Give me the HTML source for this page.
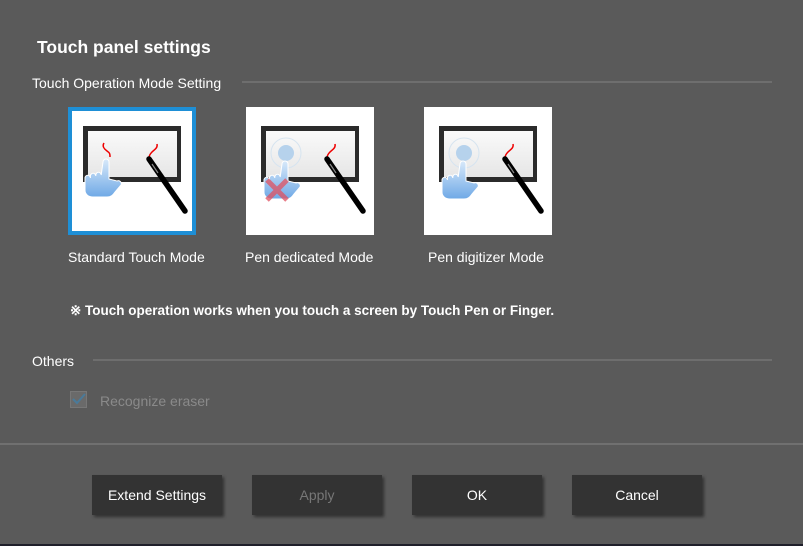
<!DOCTYPE html><html><head><style>
body{margin:0;width:803px;height:546px;background:#5a5a5a;font-family:"Liberation Sans",sans-serif;color:#fff;position:relative;overflow:hidden}
.a{position:absolute;white-space:nowrap}
.line{position:absolute;height:2px;background:#6e6e6e}
.tile{position:absolute;top:107px;width:128px;height:128px;background:#fff;box-sizing:border-box}
.btn{position:absolute;top:475px;width:130px;height:40px;background:#333;box-shadow:2px 2px 3px rgba(0,0,0,.45);text-align:center;line-height:40px;font-size:14px}
.lab{font-size:14px;top:249px}
</style></head><body>
<svg width="0" height="0" style="position:absolute"><defs>
<linearGradient id="sc" x1="0" x2="0" y1="0" y2="1"><stop offset="0" stop-color="#fafafa"/><stop offset="1" stop-color="#e6e6e6"/></linearGradient>
<linearGradient id="hd" x1="0" x2="0" y1="0" y2="1"><stop offset="0" stop-color="#d8e9fa"/><stop offset="1" stop-color="#6fa9e6"/></linearGradient>
<g id="base">
<rect x="15" y="19" width="98" height="56" fill="#2b2b2b"/>
<rect x="20" y="24" width="89" height="46" fill="url(#sc)"/>
<path d="M89 37c1 4-3 6-5 8s-3 4-3 6" stroke="#e00" stroke-width="1.5" fill="none"/>
<path d="M81 52L117 104" stroke="#000" stroke-width="5.5" stroke-linecap="round"/>
<path d="M84 57L90 66" stroke="#888" stroke-width="1.2"/>
</g>
<g id="hand"><path d="M36 57a3 3 0 0 1 6 0v17l8 2a3 3 0 0 1 4 4l-6 7c-2 3-4 5-8 5h-14c-5 0-8-3-8-7v-12a2.7 2.7 0 0 1 5.4 0v-2a2.7 2.7 0 0 1 5.4 0v-1a2.7 2.7 0 0 1 5.4 0z" fill="url(#hd)" stroke="#fff" stroke-width="1"/></g>
</defs></svg>
<div class="a" style="left:37px;top:37px;font-size:17.5px;font-weight:bold">Touch panel settings</div>
<div class="a" style="left:32px;top:75px;font-size:14px">Touch Operation Mode Setting</div>
<div class="line" style="left:242px;width:530px;top:81px"></div>
<div class="tile" style="left:68px;border:4px solid #1e8fd6"><svg width="120" height="120" viewBox="4 4 120 120"><use href="#base"/><path d="M36 36c-2 3 0 6 3 8s3 3 3 6" stroke="#e00" stroke-width="1.5" fill="none"/><use href="#hand" transform="translate(-1,-2)"/></svg></div>
<div class="tile" style="left:246px"><svg width="128" height="128"><use href="#base"/><circle cx="40" cy="46" r="15" fill="none" stroke="#d6e4f0" stroke-width="1"/><circle cx="40" cy="46" r="8" fill="#b6d2ec"/><use href="#hand"/><path d="M21 73l20 20M41 73l-20 20" stroke="#e05060" stroke-opacity=".75" stroke-width="5"/></svg></div>
<div class="tile" style="left:424px"><svg width="128" height="128"><use href="#base"/><circle cx="40" cy="46" r="15" fill="none" stroke="#d6e4f0" stroke-width="1"/><circle cx="40" cy="46" r="8" fill="#b6d2ec"/><use href="#hand"/></svg></div>
<div class="a lab" style="left:68px">Standard Touch Mode</div>
<div class="a lab" style="left:245px">Pen dedicated Mode</div>
<div class="a lab" style="left:428px">Pen digitizer Mode</div>
<div class="a" style="left:70px;top:303px;font-size:13.5px;font-weight:bold">※ Touch operation works when you touch a screen by Touch Pen or Finger.</div>
<div class="a" style="left:32px;top:353px;font-size:14px">Others</div>
<div class="line" style="left:93px;width:679px;top:359px"></div>
<div class="a" style="left:70px;top:391px;width:17px;height:17px;background:#6a6a6a;border:1px solid #777;box-sizing:border-box"><svg width="15" height="15"><path d="M2 7l4 4 8-9" stroke="#4a7a9a" stroke-width="2" fill="none"/></svg></div>
<div class="a" style="left:100px;top:393px;font-size:14px;color:#8a8a8a">Recognize eraser</div>
<div class="line" style="left:0;width:803px;top:443px;background:#707070"></div>
<div class="btn" style="left:92px">Extend Settings</div>
<div class="btn" style="left:252px;color:#777">Apply</div>
<div class="btn" style="left:412px">OK</div>
<div class="btn" style="left:572px">Cancel</div>
<div class="a" style="left:0;top:544px;width:803px;height:2px;background:#1f1f2a"></div>
</body></html>
